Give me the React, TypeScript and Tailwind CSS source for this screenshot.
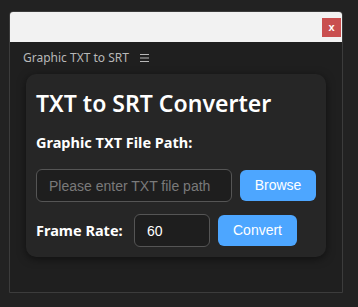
import { useState } from "react";

export default function App() {
  const [path, setPath] = useState("");
  const [fps, setFps] = useState("60");

  return (
    <div className="h-[307px] w-[358px] bg-[#222222] pl-[9px] pr-[15px] pt-[11px] pb-[14px]">
      <div className="flex h-full flex-col overflow-hidden rounded-t-[4px] border border-[#3c3c3c] bg-[#1f1f1f]">
        <div className="flex h-[30px] shrink-0 items-start justify-end bg-[#f2f2f2] pr-px pt-[6px]">
          <button
            type="button"
            className="flex h-[19px] w-[19px] items-center justify-center bg-[#c94f4f] text-[11px] font-bold leading-none text-white [font-family:'Liberation_Sans',sans-serif]"
          >
            x
          </button>
        </div>

        <div className="flex h-[32px] items-center gap-[11px] pl-[13px] text-[12px] text-[#b8b8b8] [font-family:'Noto_Sans',sans-serif]">
          <span>Graphic TXT to SRT</span>
          <svg width="9" height="8" viewBox="0 0 9 8" className="text-[#b8b8b8]">
            <path d="M0 0.5H9M0 4H9M0 7.5H9" stroke="currentColor" strokeWidth="1" />
          </svg>
        </div>

        <div className="mx-[16px] rounded-[10px] bg-[#262626] px-[10px] pt-[14px] pb-[10px] shadow-[0_2px_8px_rgba(0,0,0,0.5)]">
          <h1 className="text-[23px] font-semibold leading-[30px] text-white [font-family:'Noto_Sans',sans-serif]">
            TXT to SRT Converter
          </h1>
          <div className="mt-[14px] text-[14.5px] font-bold leading-[20px] text-white [font-family:'Noto_Sans',sans-serif]">
            Graphic TXT File Path:
          </div>

          <div className="mt-[17px] flex items-center gap-[8px] [font-family:'Liberation_Sans',sans-serif]">
            <input
              value={path}
              onChange={(e) => setPath(e.target.value)}
              placeholder="Please enter TXT file path"
              className="h-[33px] w-[196px] rounded-[6px] border border-[#555555] bg-[#1e1e1e] px-[12px] text-[14px] text-white outline-none placeholder:text-[#7a7a7a]"
            />
            <button
              type="button"
              className="h-[31px] w-[76px] rounded-[6px] bg-[#4da6ff] text-[14px] text-white"
            >
              Browse
            </button>
          </div>

          <div className="mt-[12px] flex items-center">
            <span className="w-[98px] text-[14.5px] font-bold text-white [font-family:'Noto_Sans',sans-serif]">
              Frame Rate:
            </span>
            <input
              value={fps}
              onChange={(e) => setFps(e.target.value)}
              className="h-[33px] w-[76px] rounded-[6px] border border-[#555555] bg-[#1e1e1e] px-[12px] text-[14px] text-white outline-none [font-family:'Liberation_Sans',sans-serif]"
            />
            <button
              type="button"
              className="ml-[8px] h-[31px] w-[79px] rounded-[6px] bg-[#4da6ff] text-[14px] text-white [font-family:'Liberation_Sans',sans-serif]"
            >
              Convert
            </button>
          </div>
        </div>
      </div>
    </div>
  );
}
